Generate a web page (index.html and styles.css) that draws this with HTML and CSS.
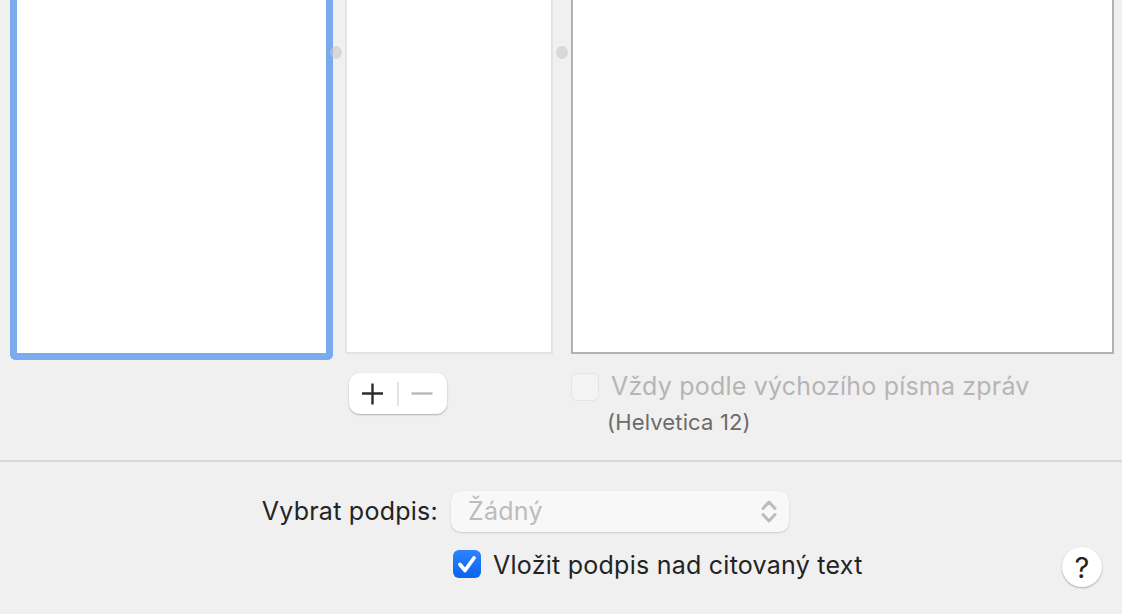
FILE: index.html
```html
<!DOCTYPE html>
<html lang="cs">
<head>
    <meta charset="UTF-8">
    <meta name="viewport" content="width=device-width, initial-scale=1.0">
    <title>Podpisy</title>
    <link rel="stylesheet" href="styles.css">
</head>
<body>

    <div class="lists">
        <div class="list list-accounts"></div>
        <div class="list list-signatures"></div>
        <div class="list list-preview"></div>
        <span class="grip grip-one"></span>
        <span class="grip grip-two"></span>
    </div>

    <div class="actions">
        <div class="add-remove">
            <svg class="glyph" width="22" height="22" viewBox="0 0 22 22"><path d="M10.5 0.5V21.5M0 10.5H21" stroke="#2c2c2c" stroke-width="2.4"/></svg>
            <span class="add-remove-sep"></span>
            <svg class="glyph" width="22" height="22" viewBox="0 0 22 22"><path d="M0.5 10.5H21.5" stroke="#b8b8b8" stroke-width="2.4"/></svg>
        </div>
        <div class="font-option">
            <div class="font-check">
                <span class="checkbox checkbox-off"></span>
                <span class="font-label">Vždy podle výchozího písma zpráv</span>
            </div>
            <div class="font-note">(Helvetica 12)</div>
        </div>
    </div>

    <hr class="divider">

    <div class="form">
        <div class="form-row">
            <label class="form-label">Vybrat podpis:</label>
            <div class="select">
                <span class="select-value">Žádný</span>
                <svg width="16" height="25" viewBox="0 0 16 25"><path d="M2 9.5L8 3L14 9.5M2 15.5L8 22L14 15.5" fill="none" stroke="#bcbcbc" stroke-width="3" stroke-linecap="round" stroke-linejoin="round"/></svg>
            </div>
        </div>
        <div class="form-row form-row-check">
            <span class="checkbox checkbox-on">
                <svg width="28" height="28" viewBox="0 0 28 28"><path d="M7 14.5L12 20.5L21 8" fill="none" stroke="#fff" stroke-width="3.8" stroke-linecap="round" stroke-linejoin="round"/></svg>
            </span>
            <span class="check-label">Vložit podpis nad citovaný text</span>
            <button class="help">?</button>
        </div>
    </div>

</body>
</html>
```

FILE: styles.css
```css
html, body {
    height: 100%;
}
body {
    font-family: Inter, "Liberation Sans", sans-serif;
    background-color: #f0f0f0;
    color: #232323;
    margin: 0;
    overflow: hidden;
}
/* Les trois listes du haut, coupees par le bord de la fenetre */
.lists {
    position: relative;
    display: flex;
    align-items: flex-start;
    padding-left: 10px;
}
.list {
    background-color: #fff;
    box-sizing: border-box;
    border-top: none;
}
.list-accounts {
    width: 323px;
    height: 360px;
    border: 7px solid #7aabec;
    border-top: none;
    border-radius: 0 0 6px 6px;
    margin-right: 12px;
}
.list-signatures {
    width: 208px;
    height: 354px;
    border: 2px solid #e3e3e3;
    border-top: none;
    margin-right: 18px;
}
.list-preview {
    width: 543px;
    height: 354px;
    border: 2px solid #b2b2b2;
    border-top: none;
}
.grip {
    position: absolute;
    top: 46px;
    width: 12px;
    height: 13px;
    border-radius: 50%;
    background-color: rgba(200, 200, 200, 0.6);
}
.grip-one {
    left: 330px;
}
.grip-two {
    left: 556px;
}
/* Boutons + et - */
.actions {
    display: flex;
    align-items: flex-start;
    height: 100px;
}
.add-remove {
    display: flex;
    align-items: center;
    justify-content: space-between;
    box-sizing: border-box;
    width: 98px;
    height: 41px;
    margin: 13px 0 0 349px;
    padding: 0 14px 0 13px;
    background-color: #fff;
    border-radius: 11px;
    box-shadow: 0 1px 2px rgba(0, 0, 0, 0.28);
}
.add-remove-sep {
    width: 2px;
    height: 24px;
    background-color: #e4e4e4;
}
.font-option {
    margin: 12px 0 0 124px;
}
.font-check {
    display: flex;
    align-items: center;
    gap: 12px;
}
.font-label {
    font-size: 25px;
    line-height: 29px;
    letter-spacing: 0.2px;
    color: #b5b5b5;
}
.font-note {
    font-size: 22px;
    line-height: 24px;
    letter-spacing: 0.15px;
    color: #6b6b6b;
    margin: 9px 0 0 36px;
}
.checkbox {
    display: block;
    box-sizing: border-box;
    width: 28px;
    height: 28px;
    border-radius: 6px;
    flex-shrink: 0;
}
.checkbox-off {
    background-color: #f3f3f3;
    border: 1px solid #e4e4e4;
}
.checkbox-on {
    background: linear-gradient(#2d83ff, #0a63ee);
    margin: 0 0 6px 453px;
}
.divider {
    height: 2px;
    margin: 0;
    border: none;
    background-color: #d9d9d9;
}
/* Bas de la fenetre */
.form {
    padding-top: 29px;
}
.form-row {
    display: flex;
    align-items: center;
    height: 41px;
}
.form-row-check {
    height: 40px;
    margin-top: 15px;
    padding-right: 20px;
}
.form-label {
    width: 438px;
    margin: 0 13px 2px 0;
    font-size: 25px;
    letter-spacing: 0.25px;
    text-align: right;
}
.select {
    display: flex;
    align-items: center;
    justify-content: space-between;
    box-sizing: border-box;
    width: 338px;
    height: 41px;
    padding: 0 12px 0 17px;
    font-size: 25px;
    letter-spacing: 0.25px;
    color: #bcbcbc;
    background-color: #f8f8f8;
    border-radius: 10px;
    box-shadow: 0 1px 2px rgba(0, 0, 0, 0.16);
}
.select-value {
    margin-bottom: 2px;
}
.check-label {
    font-size: 25px;
    letter-spacing: 0.25px;
    margin: 0 0 4px 12px;
}
.help {
    width: 40px;
    height: 40px;
    margin-left: auto;
    padding: 0;
    font-family: inherit;
    font-size: 29px;
    font-weight: 400;
    color: #232323;
    background-color: #fff;
    border: none;
    border-radius: 50%;
    box-shadow: 0 1px 2px rgba(0, 0, 0, 0.3);
}
```
